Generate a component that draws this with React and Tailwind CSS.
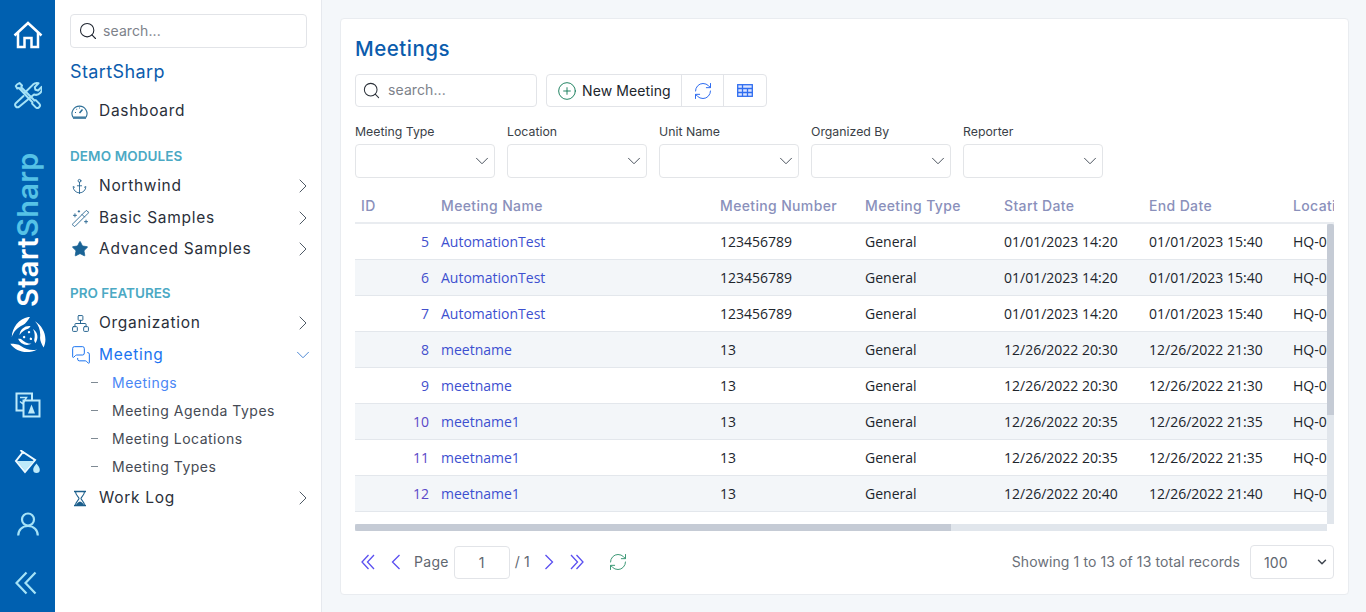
import React from "react";
import { Search, ChevronRight, ChevronDown, Anchor, WandSparkles, Star, Network, MessagesSquare, RefreshCw, CirclePlus } from "lucide-react";

const rows = [
  [5, "AutomationTest", "123456789", "01/01/2023 14:20", "01/01/2023 15:40"],
  [6, "AutomationTest", "123456789", "01/01/2023 14:20", "01/01/2023 15:40"],
  [7, "AutomationTest", "123456789", "01/01/2023 14:20", "01/01/2023 15:40"],
  [8, "meetname", "13", "12/26/2022 20:30", "12/26/2022 21:30"],
  [9, "meetname", "13", "12/26/2022 20:30", "12/26/2022 21:30"],
  [10, "meetname1", "13", "12/26/2022 20:35", "12/26/2022 21:35"],
  [11, "meetname1", "13", "12/26/2022 20:35", "12/26/2022 21:35"],
  [12, "meetname1", "13", "12/26/2022 20:40", "12/26/2022 21:40"],
];

const HomeIcon = () => (
  <svg width="30" height="28" viewBox="0 0 30 28" fill="none" stroke="#fff" strokeWidth="2.500">
    <path d="M1.500 14.500 15 2l13.500 12.500" />
    <path d="M5 12v14h6.500v-9h7v9H25V12" />
  </svg>
);
const ToolsIcon = () => (
  <svg width="28" height="28" viewBox="0 0 28 28" fill="none" stroke="#a5e3f7" strokeWidth="2" strokeLinejoin="round" strokeLinecap="round">
    <path d="M3 3.500 5.500 2 8 4.500l-.8 1.700 13.300 13.300 1.300-.4 3.400 3.500a2.500 2.500 0 0 1-3.700 3.500l-3.400-3.500.3-1.400L5 7 3.200 7.400 1.800 5z" />
    <path d="M11 11.500 19 3.600a6 6 0 0 1 5.500-1.300l-3.700 3.800.6 2.700 2.700.7 3.500-3.600A6 6 0 0 1 20 13.500L4.800 26a2.500 2.500 0 0 1-3.300-3.500L9.500 15" />
  </svg>
);
const Swirl = () => (
  <svg width="38" height="38" viewBox="-19 -19 38 38" fill="#fff">
    {[-15, 105, 225].map((a) => (
      <g key={a} transform={`rotate(${a})`}>
        <path d="M7 -18C-3 -20 -13 -13 -16 -3C-13 -8 -8 -11 -2 -12C1 -12.500 4 -15 7 -18Z" />
        <path d="M5 -9C0 -11 -6 -9 -8 -3C-5 -6 -1 -7 2 -7C3 -7 4 -8 5 -9Z" />
        <circle cx="2" cy="-3.500" r="1.200" />
      </g>
    ))}
  </svg>
);
const LangIcon = () => (
  <svg width="26" height="26" viewBox="0 0 26 26" fill="none" stroke="#bdeafa" strokeWidth="2">
    <path d="M17 8.500V1.500H1.500V18.500H8.500" />
    <rect x="8.500" y="8.500" width="16" height="16" />
    <path d="M5 5.500h6.500L7.500 12M5 9.500l3 2.500" strokeWidth="1.500" />
    <path d="M13 21.500h7l-3.500-9z" fill="#bdeafa" stroke="none" />
  </svg>
);
const BucketIcon = () => (
  <svg width="27" height="26" viewBox="0 0 27 26" fill="none" stroke="#eefaff" strokeWidth="2">
    <path d="M6.500 0 10 3.500" />
    <path d="M9 2 2 11 11 22 21 10z" />
    <path d="M3 11h17l-9 10z" fill="#bdeafa" stroke="none" />
    <path d="M22.500 13.500c2 2.600 3.300 4.300 3.300 6.300a3.300 3.300 0 0 1-6.600 0c0-2 1.300-3.700 3.300-6.300z" fill="#bdeafa" stroke="none" />
  </svg>
);
const UserIcon = () => (
  <svg width="22" height="24" viewBox="0 0 22 24" fill="none" stroke="#a5e3f7" strokeWidth="2.200">
    <circle cx="11" cy="7.500" r="6" />
    <path d="M1.200 23.500c0-5.500 4-9.500 9.800-9.500s9.800 4 9.800 9.500" />
  </svg>
);
const DoubleLeft = () => (
  <svg width="22" height="24" viewBox="0 0 22 24" fill="none" stroke="#a5e3f7" strokeWidth="2.200">
    <path d="M11.500 1.500 1.500 12l10 10.500" />
    <path d="M20.500 1.500 10.500 12l10 10.500" />
  </svg>
);
const Pg = ({ d, w, cls }) => (
  <svg width={w} height="16" viewBox={`0 0 ${w} 16`} fill="none" stroke="#5a4ff0" strokeWidth="1.300" className={cls}>
    <path d={d} />
  </svg>
);
const GaugeIcon = () => (
  <svg width="17" height="15" viewBox="0 0 17 15" fill="none" stroke="#2c6e96" strokeWidth="1.100">
    <path d="M1.800 13A7.500 7.500 0 1 1 15.200 13z" />
    <path d="M2 14h13" strokeWidth="1.600" />
    <path d="M8.500 9l3-3.500" strokeWidth="1.500" />
    <path d="M4 8.500h1M5.500 5l.5.500M8.500 3.500v1" />
  </svg>
);
const Hourglass = () => (
  <svg width="14" height="17" viewBox="0 0 14 16" fill="none" stroke="#1c5f8c" strokeWidth="1.400">
    <path d="M1 1h12M1 15h12" strokeWidth="1.600" />
    <path d="M2.500 1c0 4 3.500 5.500 3.500 7s-3.500 3-3.500 7M11.500 1c0 4-3.500 5.500-3.500 7s3.500 3 3.500 7" strokeWidth="1.100" />
    <path d="M3 15c.5-2.500 2.500-3.500 4-4 1.500.5 3.500 1.500 4 4z" fill="#1c5f8c" stroke="none" />
  </svg>
);
const GridIcon = () => (
  <svg width="16" height="13" viewBox="0 0 16 13" fill="#dbe4ff" stroke="#2f6df0" strokeWidth="1.300">
    <rect x="0.700" y="0.700" width="14.600" height="11.600" />
    <path d="M0.700 4.500h14.600M0.700 8.500h14.600M5.500 0.700v11.600M10.500 4.500v7.800" fill="none" />
  </svg>
);

const NavRow = ({ icon, label, cls, open, active, noChevron }) => (
  <div className={`flex items-center pl-[1px] ${cls}`}>
    <span className="w-[28px] flex items-center justify-start shrink-0">{icon}</span>
    <span className={`text-[15.500px] leading-none flex-1 tracking-[0.7px] ${active ? "text-[#1a73f0]" : "text-[#2a2f3a]"}`}>{label}</span>
    {noChevron ? null : open ? (
      <ChevronDown size={22} strokeWidth={1} className="text-[#3f7fd0] mr-[-7px]" />
    ) : (
      <ChevronRight size={24} strokeWidth={1} className="text-[#4f5a66] mr-[-8px]" />
    )}
  </div>
);
const SubRow = ({ label, active }) => (
  <div className={`flex items-center h-[28px] pl-[21px] text-[14px] tracking-[0.5px] ${active ? "text-[#4a86f5]" : "text-[#454a54]"}`}>
    <span className="w-[7px] h-px bg-[#7f8a94] mr-[14px]"></span>
    <span>{label}</span>
  </div>
);
const FilterBox = ({ label }) => (
  <div className="w-[140px]">
    <div className="text-[12.300px] leading-[17px] tracking-normal text-[#3a3f47] mb-[4px]">{label}</div>
    <div className="h-[34px] border border-[#e3e5e8] rounded-[4px] bg-white flex items-center justify-end pr-[1px]">
      <ChevronDown size={22} strokeWidth={1} className="text-[#3b4450]" />
    </div>
  </div>
);
const Cols = ({ id, name, num, type, start, end, loc, idCls, nameCls }) => (
  <>
    <div className={`w-[80px] shrink-0 px-[6px] ${idCls}`}>{id}</div>
    <div className={`w-[279px] shrink-0 px-[6px] ${nameCls}`}>{name}</div>
    <div className="w-[145px] shrink-0 px-[6px]">{num}</div>
    <div className="w-[139px] shrink-0 px-[6px]">{type}</div>
    <div className="w-[145px] shrink-0 px-[6px]">{start}</div>
    <div className="w-[144px] shrink-0 px-[6px]">{end}</div>
    <div className="w-[100px] shrink-0 px-[6px]">{loc}</div>
  </>
);

export default function App() {
  return (
    <div className="flex h-screen overflow-hidden bg-[#f4f7fa] font-['Inter',sans-serif] tracking-[0.1px]">
      <aside className="w-[55px] shrink-0 bg-[#0060b0] flex flex-col items-center">
        <div className="h-[70px] flex items-center justify-center shrink-0"><HomeIcon /></div>
        <div className="h-[50px] flex items-center justify-center shrink-0"><ToolsIcon /></div>
        <div className="h-[156px] mt-[32px] shrink-0 flex items-center justify-center [writing-mode:vertical-rl] rotate-180 text-[29px] font-semibold leading-none tracking-[0.3px]">
          <span className="text-white">Start</span><span className="text-[#55c2e6]">Sharp</span>
        </div>
        <div className="mt-[9px] shrink-0"><Swirl /></div>
        <div className="mt-[37px] shrink-0"><LangIcon /></div>
        <div className="mt-[32px] shrink-0"><BucketIcon /></div>
        <div className="mt-[36px] shrink-0"><UserIcon /></div>
        <div className="mt-[35px] mr-[4px] shrink-0"><DoubleLeft /></div>
      </aside>

      <nav className="w-[267px] shrink-0 bg-white border-r border-[#e6e9ee] pl-[15px] pr-[14px] pt-[14px]">
        <div className="h-[34px] border border-[#e2e4e8] rounded-[4px] flex items-center pl-[7px]">
          <Search size={20} strokeWidth={1.300} className="text-[#1f2530]" />
          <span className="ml-[5px] mb-[2px] text-[14px] text-[#7d828a]">search...</span>
        </div>
        <div className="mt-[12px] text-[18px] leading-[24px] tracking-[0.4px] text-[#0b5cad]">StartSharp</div>
        <NavRow noChevron cls="h-[32px] mt-[11px]" icon={<GaugeIcon />} label="Dashboard" />
        <div className="mt-[20px] h-[18px] leading-[18px] text-[13.500px] font-semibold text-[#4ba9c4]">DEMO MODULES</div>
        <NavRow cls="h-[32px] mt-[5px]" icon={<Anchor size={17} strokeWidth={1.200} className="text-[#1f5f8c]" />} label="Northwind" />
        <NavRow cls="h-[32px]" icon={<WandSparkles size={19} strokeWidth={1.100} className="text-[#1f5f8c]" />} label="Basic Samples" />
        <NavRow cls="h-[30px]" icon={<Star size={18} fill="#1a6396" strokeWidth={1} className="text-[#1a6396]" />} label="Advanced Samples" />
        <div className="mt-[20px] h-[18px] leading-[18px] text-[13.500px] font-semibold tracking-normal text-[#4ba9c4]">PRO FEATURES</div>
        <NavRow cls="h-[32px] mt-[5px]" icon={<Network size={19} strokeWidth={1.200} className="text-[#1f5f8c]" />} label="Organization" />
        <NavRow cls="h-[32px]" active open icon={<MessagesSquare size={20} strokeWidth={1.200} className="text-[#1a73f0]" />} label="Meeting" />
        <div className="mt-[-3px]">
          <SubRow active label="Meetings" />
          <SubRow label="Meeting Agenda Types" />
          <SubRow label="Meeting Locations" />
          <SubRow label="Meeting Types" />
        </div>
        <NavRow cls="h-[32px] mt-[2px]" icon={<span className="pl-[2px] flex"><Hourglass /></span>} label="Work Log" />
      </nav>

      <main className="flex-1 min-w-0 pl-[18px] pr-[17px] pt-[18px] pb-[17px]">
        <div className="h-full bg-white border border-[#e9ecf0] rounded-[4px] pl-[14px] pr-[14px] flex flex-col">
          <h1 className="h-[55px] pt-[16px] text-[20.500px] leading-[28px] font-medium tracking-[0.5px] text-[#0b5cad]">Meetings</h1>
          <div className="flex gap-[9px] shrink-0">
            <div className="w-[182px] h-[33px] border border-[#e2e4e8] rounded-[4px] flex items-center pl-[6px]">
              <Search size={19} strokeWidth={1.300} className="text-[#2a3038]" />
              <span className="ml-[7px] mb-[2px] text-[14px] text-[#7d828a]">search...</span>
            </div>
            <div className="h-[33px] border border-[#e2e4e8] rounded-[4px] flex items-stretch">
              <div className="w-[134px] flex items-center pl-[10px] text-[14px] text-[#20252c]">
                <CirclePlus size={20} strokeWidth={1.100} className="text-[#0f7a55] mr-[5px]" />New Meeting
              </div>
              <div className="w-[42px] border-l border-[#e2e4e8] flex items-center justify-center">
                <RefreshCw size={20} strokeWidth={1.200} className="text-[#2f6df0]" />
              </div>
              <div className="w-[43px] border-l border-[#e2e4e8] flex items-center justify-center">
                <GridIcon />
              </div>
            </div>
          </div>
          <div className="flex gap-[12px] mt-[16px] shrink-0">
            {["Meeting Type", "Location", "Unit Name", "Organized By", "Reporter"].map((l) => <FilterBox key={l} label={l} />)}
          </div>
          <div className="mt-[11px] flex-1 min-h-0 flex flex-col">
            <div className="w-[979px] h-[35px] overflow-hidden flex items-center border-b-2 border-[#e9ecf0] text-[14px] font-medium tracking-[0.35px] text-[#8a90bb] shrink-0 whitespace-nowrap">
              <Cols id="ID" name="Meeting Name" num="Meeting Number" type="Meeting Type" start="Start Date" end="End Date" loc="Location" idCls="" nameCls="" />
            </div>
            <div className="flex w-[979px] h-[300px] shrink-0">
              <div className="w-[972px] overflow-hidden">
                {rows.map((r, i) => (
                  <div key={r[0]} className={`h-[36px] flex items-center border-b border-[#e3e7ec] font-['Open_Sans',sans-serif] tracking-normal text-[14px] text-[#20252c] whitespace-nowrap ${i % 2 ? "bg-[#f3f6f9]" : "bg-white"}`}>
                    <Cols
                      id={r[0]} name={r[1]} num={r[2]} type="General" start={r[3]} end={r[4]} loc="HQ-001"
                      idCls={`text-right ${r[0] >= 10 ? "text-[#5a48c8]" : "text-[#4350cc]"}`}
                      nameCls="text-[#3d50d0]"
                    />
                  </div>
                ))}
              </div>
              <div className="w-[7px] bg-[#e1e6ec]">
                <div className="h-[191px] bg-[#c5cbd5] rounded-t-[2px]"></div>
              </div>
            </div>
            <div className="w-[972px] h-[7px] bg-[#e1e6ec] shrink-0">
              <div className="w-[596px] h-full bg-[#c5cbd5] rounded-l-[2px]"></div>
            </div>
            <div className="flex items-center mt-[14px] shrink-0">
              <Pg w={14} d="M7.500 1 1 8l6.500 7M13 1 6.500 8l6.500 7" cls="ml-[6px]" />
              <Pg w={10} d="M8.500 1 1.500 8l7 7" cls="ml-[16px]" />
              <span className="ml-[13px] mb-[1px] text-[14px] tracking-[0.3px] text-[#5f6770]">Page</span>
              <div className="ml-[5px] w-[56px] h-[33px] border border-[#e2e4e8] rounded-[4px] flex items-center justify-center text-[14px] text-[#5f6770]">1</div>
              <span className="ml-[5px] mb-[1px] text-[14px] text-[#5f6770]">/ 1</span>
              <Pg w={10} d="M1.500 1l7 7-7 7" cls="ml-[14px]" />
              <Pg w={14} d="M1 1l6.500 7L1 15M6.500 1 13 8l-6.500 7" cls="ml-[16px]" />
              <RefreshCw size={20} strokeWidth={1.200} className="text-[#3f9a78] ml-[24px]" />
              <span className="ml-auto mb-[1px] text-[14px] text-[#6a6f78]">Showing 1 to 13 of 13 total records</span>
              <div className="ml-[10px] w-[84px] h-[34px] border border-[#e2e4e8] rounded-[4px] flex items-center justify-between pl-[13px] pr-[4px] text-[14px] text-[#5f6770]">
                100<ChevronDown size={14} strokeWidth={2.500} className="text-[#3f4650]" />
              </div>
            </div>
          </div>
        </div>
      </main>
    </div>
  );
}
